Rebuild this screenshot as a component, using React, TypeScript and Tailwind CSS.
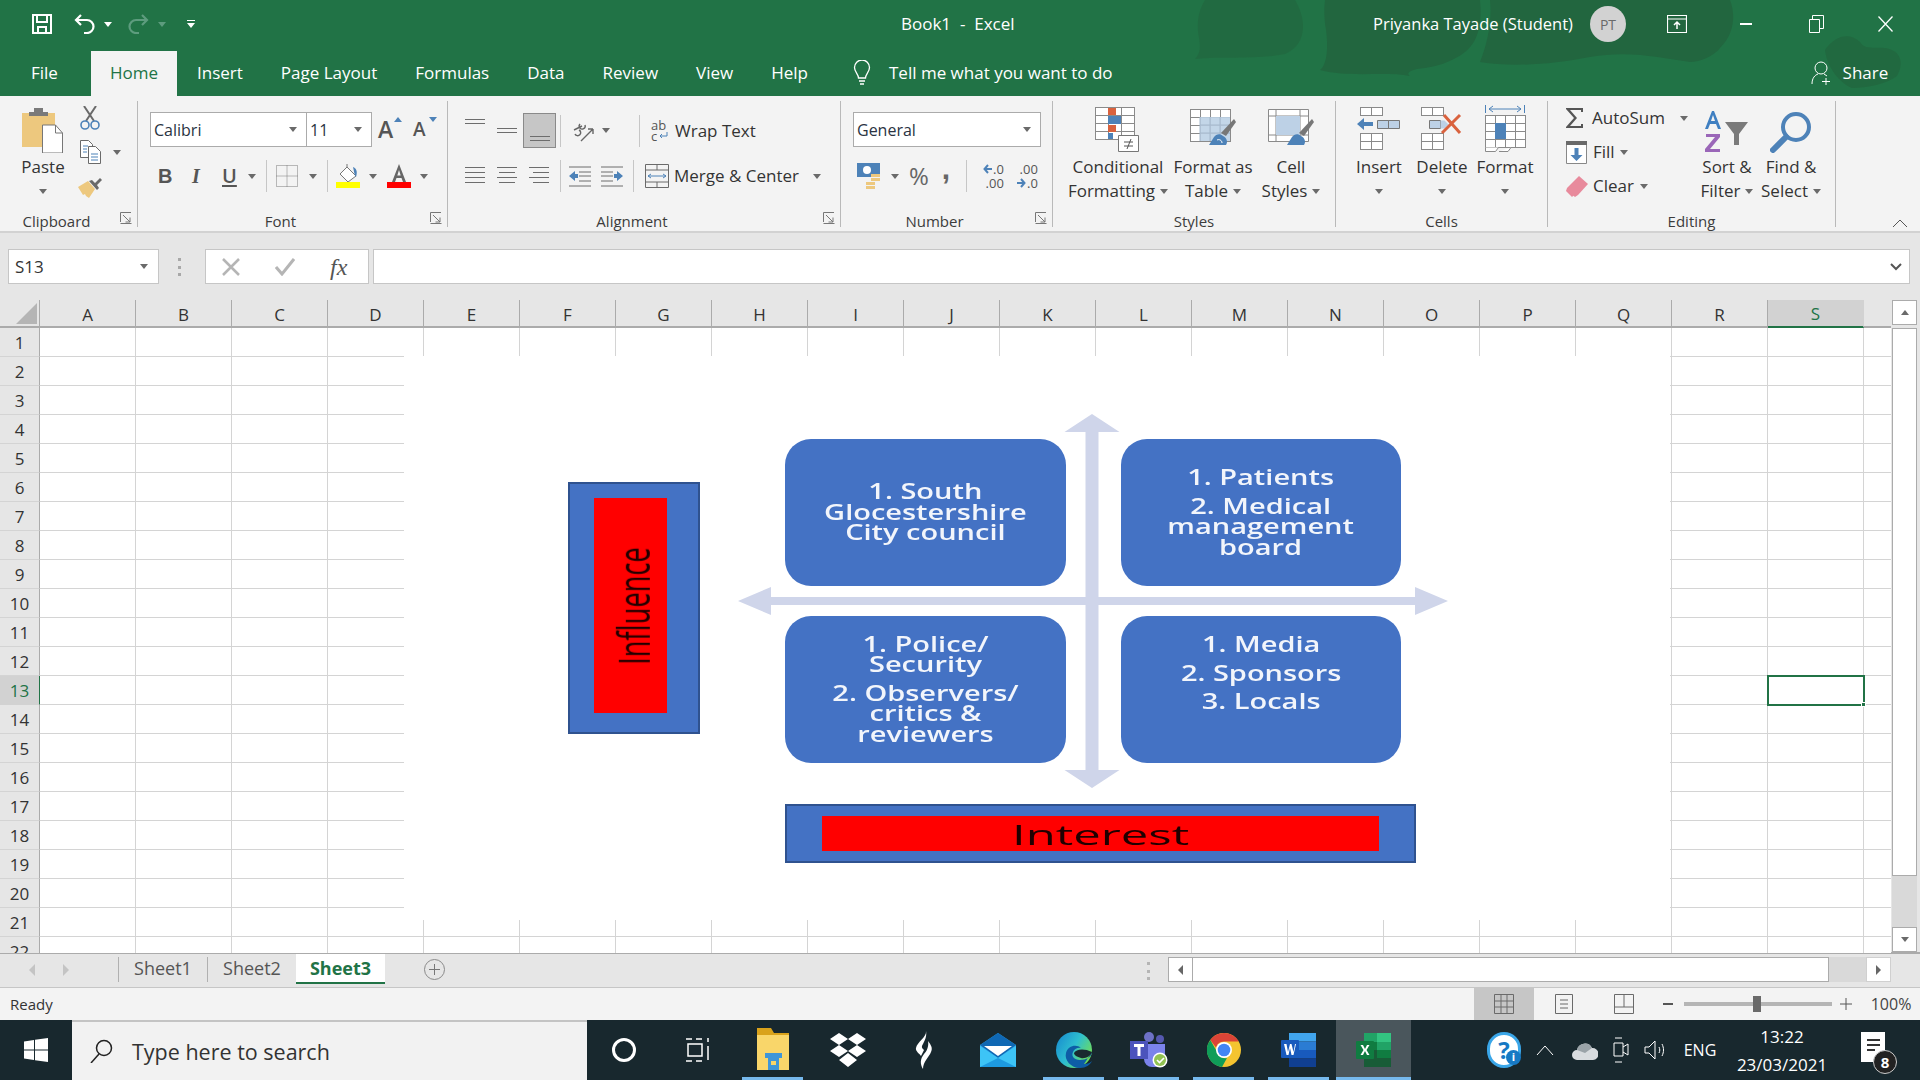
import { ReactNode } from "react";

const FONT = "font-['Open_Sans','Noto_Sans',sans-serif]";
const COLUMNS = "ABCDEFGHIJKLMNOPQRS".split("");
const ROWS = Array.from({ length: 22 }, (_, i) => i + 1);
const TABS = ["Insert", "Page Layout", "Formulas", "Data", "Review", "View", "Help"];

const Caret = ({ className = "", fill = "#6a6a6a" }: { className?: string; fill?: string }) => (
  <svg width="8" height="5" viewBox="0 0 8 5" className={className}>
    <path d="M0 0h8L4 5z" fill={fill} />
  </svg>
);

const Launcher = () => (
  <svg width="12" height="12" viewBox="0 0 12 12" className="absolute right-[5px] bottom-[3px]" fill="none" stroke="#777">
    <path d="M.5 10V.5H11M3 3l7 7M10 5.5V10H5.5M.5 11.5h11" />
  </svg>
);

const Group = ({ className, label, launcher, children }: { className: string; label: string; launcher?: boolean; children: ReactNode }) => (
  <div className={`relative flex h-[126px] shrink-0 flex-col border-r border-[#b9b9b9] ${className}`}>
    <div className="flex h-[110px] shrink-0 items-start">{children}</div>
    <div className={`shrink-0 text-center text-[15px] leading-[20px] text-[#3c3c3c] ${launcher ? "pr-[24px]" : ""}`}>{label}</div>
    {launcher && <Launcher />}
  </div>
);

const BigButton = ({ className, icon, l1, l2, iconH = "h-[54px]" }: { className: string; icon: ReactNode; l1: string; l2?: string; iconH?: string }) => (
  <div className={`flex shrink-0 flex-col items-center text-[17px] leading-[24px] text-[#333] ${className}`}>
    <div className={`flex items-end justify-center pb-[2px] ${iconH}`}>{icon}</div>
    <div className="whitespace-nowrap">{l1}</div>
    {l2 ? (
      <div className="flex items-center gap-[5px] whitespace-nowrap">
        {l2}
        <Caret />
      </div>
    ) : (
      <div className="flex h-[24px] items-center">
        <Caret />
      </div>
    )}
  </div>
);

const Combo = ({ className, text }: { className: string; text: string }) => (
  <div className={`flex h-[35px] items-center justify-between border border-[#ababab] bg-white pl-[3px] pr-[9px] text-[16px] text-[#2a3342] ${className}`}>
    {text}
    <Caret />
  </div>
);

const Lines = ({ rows }: { rows: [number, number, number][] }) => (
  <svg width="22" height="22" viewBox="0 0 22 22" stroke="#6d6d6d">
    {rows.map(([y, x, w], i) => (
      <path key={i} d={`M${x} ${y + 0.5}h${w}`} />
    ))}
  </svg>
);

const VSep = ({ className = "" }: { className?: string }) => <div className={`w-px bg-[#c6c6c6] ${className}`} />;

/* ribbon icons */
const PasteIcon = () => (
  <svg width="42" height="46" viewBox="0 0 42 46">
    <path d="M0 6h33v34H0z" fill="#edc87e" />
    <path d="M7 5h5V1h9v4h5v4H7z" fill="#7a7a7a" />
    <path d="M20.500 18h13l7 8v20h-20z" fill="#fff" stroke="#777" />
    <path d="M33.500 18v8h7" fill="none" stroke="#777" />
  </svg>
);
const ScissorsIcon = () => (
  <svg width="20" height="24" viewBox="0 0 20 24" fill="none">
    <path d="M4 0l10 15M16 0L6 15" stroke="#6a6a6a" strokeWidth="2" />
    <circle cx="5" cy="19" r="4" stroke="#4d82b8" strokeWidth="1.600" />
    <circle cx="15" cy="19" r="4" stroke="#4d82b8" strokeWidth="1.600" />
  </svg>
);
const CopyIcon = () => (
  <svg width="21" height="24" viewBox="0 0 21 24" fill="#fff" stroke="#6a6a6a">
    <path d="M.5.500h8l4 4v13h-12z" />
    <path d="M8.500 6.500h7l5 5v12h-12z" />
    <path d="M3 6h5M3 9h4M3 12h4M11 14h7M11 17h7M11 20h7" stroke="#4d82b8" />
  </svg>
);
const BrushIcon = () => (
  <svg width="24" height="22" viewBox="0 0 24 22">
    <path d="M0 10l10-6 7 8-6 9-3-2-1-2-2 1z" fill="#edc87e" />
    <path d="M11 4l3-1 3 3 5-5 2 2-5 5 2 3-2 2z" fill="#6a6a6a" />
  </svg>
);
const FontSizeA = ({ big, up }: { big: boolean; up: boolean }) => (
  <div className={`relative flex h-[30px] items-center font-semibold text-[#555] ${big ? "w-[35px] text-[23px]" : "w-[28px] text-[19px]"}`}>
    A
    <svg width="8" height="5" viewBox="0 0 8 5" className="absolute top-[2px] left-[16px]">
      <path d={up ? "M0 5h8L4 0z" : "M0 0h8L4 5z"} fill="#4d82b8" />
    </svg>
  </div>
);
const BorderIcon = () => (
  <svg width="22" height="22" viewBox="0 0 22 22" fill="none" stroke="#7a7a7a" strokeDasharray="1 1">
    <path d="M.5.500h21v21H.5zM11 .5v21M.5 11h21" />
  </svg>
);
const FillIcon = () => (
  <svg width="24" height="24" viewBox="0 0 24 24">
    <path d="M11 3l9 9-8 6-8-8z" fill="#fff" stroke="#777" />
    <path d="M11 3V0" stroke="#777" />
    <path d="M17 3c3 1 5 4 3 10-2-3-2-6-3-10z" fill="#4d82b8" />
    <path d="M0 18h24v6H0z" fill="#ffff00" />
  </svg>
);
const FontColorIcon = () => (
  <svg width="24" height="24" viewBox="0 0 24 24">
    <path d="M12 0l7 18h-3l-1.500-4h-5L8 18H5zM12 6l-1.700 5.500h3.400z" fill="#666" fillRule="evenodd" />
    <path d="M0 18h24v6H0z" fill="#ff0000" />
  </svg>
);
const OrientIcon = () => (
  <svg width="22" height="22" viewBox="0 0 22 22" fill="none" stroke="#666" strokeWidth="1.400">
    <path d="M9 21L21 9M21 9h-5M21 9v5" />
    <path d="M2 10l8-4M3 14a3 3 0 1 0 4-4M8 4a3 3 0 1 0 5 1" />
  </svg>
);
const IndentIcon = ({ flip }: { flip?: boolean }) => (
  <svg width="22" height="22" viewBox="0 0 22 22" className={flip ? "-scale-x-100" : ""}>
    <path d="M0 2h22M0 21h22M10 7h12M10 11h12M10 16h12" stroke="#6d6d6d" />
    <path d="M0 11l6-5v3h3v4H6v3z" fill="#4d82b8" />
  </svg>
);
const MergeIcon = () => (
  <svg width="24" height="24" viewBox="0 0 24 24" fill="none" stroke="#6a6a6a">
    <path d="M.5.500h23v23H.5zM.5 6h23M.5 18h23M12 .5V6M12 18v5.500" />
    <path d="M3 12h18M3 12l3-2M3 12l3 2M21 12l-3-2M21 12l-3 2" stroke="#4d82b8" />
  </svg>
);
const WrapIcon = () => (
  <svg width="10" height="8" viewBox="0 0 10 8" fill="none" stroke="#4d82b8">
    <path d="M9 0v4H2M4 2L2 4l2 2" />
  </svg>
);
const MoneyIcon = () => (
  <svg width="24" height="26" viewBox="0 0 24 26">
    <path d="M0 0h23v14H0z" fill="#4d82b8" />
    <circle cx="10" cy="7" r="4" fill="#fff" />
    <path d="M14 11h9v3h-9zM14 15h9v3h-9zM9 19h9v3H9zM9 23h9v3H9z" fill="#edc87e" />
  </svg>
);
const DecArrow = ({ left }: { left?: boolean }) => (
  <svg width="9" height="10" viewBox="0 0 9 10" fill="none" stroke="#4d82b8" strokeWidth="2">
    <path d={left ? "M9 5H2M5 1L1.500 5 5 9" : "M0 5h7M4 1l3.500 4L4 9"} />
  </svg>
);
const DecimalIcon = ({ less }: { less?: boolean }) => (
  <div className="flex w-[32px] flex-col text-[13px] leading-[14px] text-[#555]">
    <div className="flex items-center justify-end gap-[1px]">
      {!less && <DecArrow left />}
      {less ? ".00" : ".0"}
    </div>
    <div className="flex items-center justify-end gap-[1px]">
      {less && <DecArrow />}
      {less ? ".0" : ".00"}
    </div>
  </div>
);
const GridSheet = ({ x, y, w, h, cols, rows }: { x: number; y: number; w: number; h: number; cols: number; rows: number }) => (
  <g fill="#fff" stroke="#8a8a8a">
    {Array.from({ length: cols * rows }, (_, i) => (
      <rect key={i} x={x + (i % cols) * (w / cols) + 0.5} y={y + Math.floor(i / cols) * (h / rows) + 0.5} width={w / cols} height={h / rows} />
    ))}
  </g>
);
const CondIcon = () => (
  <svg width="46" height="46" viewBox="0 0 46 46">
    <GridSheet x={0} y={0} w={39} h={32} cols={3} rows={4} />
    <path d="M13 1h8v7h-8zM13 18h8v7h-8z" fill="#d9623e" />
    <path d="M13 9h13v8H13zM13 26h5v6h-5z" fill="#4d82b8" />
    <path d="M23.500 28.500h20v16h-20z" fill="#fff" stroke="#777" />
    <path d="M29 35h9M29 39h9M36 32l-4 10" stroke="#555" fill="none" />
  </svg>
);
const TableIcon = () => (
  <svg width="46" height="44" viewBox="0 0 46 44">
    <GridSheet x={0} y={0} w={40} h={32} cols={4} rows={4} />
    <path d="M10 8h30v24H10z" fill="#bdd1e6" opacity=".9" />
    <path d="M10 8v24M20 8v24M30 8v24M10 16h30M10 24h30" stroke="#a5b8cc" />
    <path d="M44 10l2 3-10 14-5-3z" fill="#777" />
    <path d="M33 27c-3-3-7-2-9 1l-5 8h17c2-3 1-7-3-9z" fill="#4d82b8" />
    <path d="M27 31c2-1 5 0 5 3" stroke="#fff" fill="none" />
  </svg>
);
const CellStyleIcon = () => (
  <svg width="46" height="44" viewBox="0 0 46 44">
    <path d="M.5.500h40v32H.5z" fill="#fff" stroke="#8a8a8a" />
    <path d="M.5 7h40M8 .5v32M32 .5v32M.5 26h40" stroke="#8a8a8a" />
    <path d="M8 7h24v19H8z" fill="#bdd1e6" />
    <path d="M44 10l2 3-10 14-5-3z" fill="#777" />
    <path d="M33 27c-3-3-7-2-9 1l-5 8h17c2-3 1-7-3-9z" fill="#4d82b8" />
  </svg>
);
const InsertIcon = () => (
  <svg width="44" height="46" viewBox="0 0 44 46">
    <GridSheet x={3} y={0} w={22} h={8} cols={2} rows={1} />
    <GridSheet x={3} y={26} w={22} h={16} cols={2} rows={2} />
    <g fill="#bdd1e6" stroke="#777"><path d="M20.500 13.500h11v8h-11zM31.500 13.500h11v8h-11z" /></g>
    <path d="M0 17l7-6v4h9v4H7v4z" fill="#4d82b8" />
  </svg>
);
const DeleteIcon = () => (
  <svg width="44" height="46" viewBox="0 0 44 46">
    <GridSheet x={1} y={0} w={22} h={8} cols={2} rows={1} />
    <GridSheet x={1} y={26} w={22} h={16} cols={2} rows={2} />
    <path d="M9.500 13.500h11v8h-11z" fill="#bdd1e6" stroke="#777" />
    <path d="M20.500 13.500h4l4 4-4 4h-4z" fill="#bdd1e6" />
    <path d="M22 26l18-18M24 8l16 18" stroke="#d9623e" strokeWidth="3" />
  </svg>
);
const FormatIcon = () => (
  <svg width="42" height="48" viewBox="0 0 42 48">
    <path d="M1.500 0v8M40.500 0v8M5 4h32M5 4l4-3M5 4l4 3M37 4l-4-3M37 4l-4 3" fill="none" stroke="#4d82b8" />
    <GridSheet x={1} y={10} w={40} h={32} cols={4} rows={4} />
    <path d="M11 18h11v16H11z" fill="#4d82b8" />
    <path d="M1.500 42.500v4h10l3-4M15 46.500h9l3-4" fill="#fff" stroke="#8a8a8a" />
  </svg>
);
const SigmaIcon = () => (
  <svg width="18" height="20" viewBox="0 0 18 20"><path d="M0 0h17v4h-2V2H4l7 8-7 8h11v-2h2v4H0v-1l8-9-8-9z" fill="#555" /></svg>
);
const FillDownIcon = () => (
  <svg width="21" height="23" viewBox="0 0 21 23">
    <path d="M.5.500h20v22H.5z" fill="#fff" stroke="#888" />
    <path d="M0 0h21v4H0z" fill="#6a6a6a" />
    <path d="M8.500 7h4v7h4l-6 6-6-6h4z" fill="#4d82b8" />
  </svg>
);
const EraserIcon = () => (
  <svg width="22" height="21" viewBox="0 0 22 21">
    <path d="M13 0l9 8-10 11-3 2-8-6v-3z" fill="#e88a9c" />
    <path d="M1 12l7 7-2 2-6-6z" fill="#e88a9c" />
  </svg>
);
const SortIcon = () => (
  <svg width="44" height="42" viewBox="0 0 44 42">
    <path d="M0 18L7 0h2l7 18h-3l-2-5H5l-2 5zM6 10h4L8 4z" fill="#3f7fc1" fillRule="evenodd" />
    <path d="M1 23h14v3L5 38h10v3H0v-3l10-12H1z" fill="#9a66b8" />
    <path d="M20 11h23l-9 12v11h-5V23z" fill="#7a7a7a" />
  </svg>
);
const FindIcon = () => (
  <svg width="42" height="42" viewBox="0 0 42 42" fill="none" stroke="#4d82b8">
    <circle cx="26" cy="16" r="13" strokeWidth="4" />
    <path d="M16 26L3 39" strokeWidth="6" strokeLinecap="round" />
  </svg>
);

/* taskbar icons */
const FolderIcon = () => (
  <svg width="34" height="48" viewBox="0 0 34 48">
    <path d="M1 2h14l3 5h15v6H1z" fill="#d9a21b" />
    <path d="M1 9h32v35H1z" fill="#f9d66a" />
    <path d="M9 27h17v5h-3v12H12V32H9z" fill="#3f96d8" />
    <path d="M15 35h5v4h-5z" fill="#f9d66a" />
  </svg>
);
const DropboxIcon = () => (
  <svg width="36" height="34" viewBox="0 0 36 34" fill="#fff">
    <path d="M9 0l9 6-9 6-9-6zM27 0l9 6-9 6-9-6zM9 12l9 6-9 6-9-6zM27 12l9 6-9 6-9-6zM18 20l9 7-9 7-9-7z" />
  </svg>
);
const SwayIcon = () => (
  <svg width="20" height="38" viewBox="0 0 20 38" fill="#fff">
    <path d="M13 0c1 6-9 11-10 17-1 3 4 6 5 8l3-6c-2-2-3-3-1-6 2-4 4-8 3-13zM15 10c3 4 5 7 3 11-2 5-8 10-8 17-3-5-3-10 1-15 3-3 5-8 4-13z" />
  </svg>
);
const MailIcon = () => (
  <svg width="36" height="34" viewBox="0 0 36 34">
    <path d="M0 12L18 0l18 12v22H0z" fill="#2fa8e8" />
    <path d="M18 0L0 12l18 13 18-13z" fill="#0f68b4" />
    <path d="M4 13h28L18 23z" fill="#fff" />
    <path d="M0 13l18 12 18-12v21H0z" fill="#3dc4f6" />
    <path d="M0 34l18-9 18 9z" fill="#1d9ae0" />
  </svg>
);
const EdgeIcon = () => (
  <svg width="36" height="36" viewBox="0 0 36 36">
    <defs>
      <linearGradient id="edgeG" x1="0" y1="0" x2="1" y2="0.6">
        <stop offset="0" stopColor="#1586cf" />
        <stop offset=".55" stopColor="#2ebfd0" />
        <stop offset="1" stopColor="#6fdc5a" />
      </linearGradient>
    </defs>
    <circle cx="18" cy="18" r="18" fill="url(#edgeG)" />
    <path d="M36 20c0 5-6 8-12 8-6 0-9-4-7-8 1-3 5-5 8-4-4-4-13-3-15 5-2 7 5 15 14 15 6 0 10-3 12-7-2 2-4 3-8 3" fill="#0e5da6" />
    <path d="M18 21c2-4 10-5 18-1-1 4-7 7-11 6s-7-3-7-5z" fill="#1a2a30" />
  </svg>
);
const TeamsIcon = () => (
  <svg width="38" height="36" viewBox="0 0 38 36">
    <circle cx="19" cy="5" r="5" fill="#6d71c6" />
    <circle cx="30" cy="7" r="4" fill="#5558af" />
    <path d="M14 12h21v14a9 9 0 0 1-9 9h-4a8 8 0 0 1-8-8z" fill="#7b83eb" />
    <path d="M0 9h18v18H0z" fill="#4b53bc" />
    <path d="M4 12h10v3h-3.500v9h-3v-9H4z" fill="#fff" />
    <circle cx="30" cy="28" r="7.500" fill="#fff" />
    <circle cx="30" cy="28" r="6" fill="#92c353" />
    <path d="M27 28l2.500 2.500L34 26" stroke="#fff" strokeWidth="1.600" fill="none" />
  </svg>
);
const ChromeIcon = () => (
  <svg width="34" height="34" viewBox="0 0 34 34">
    <circle cx="17" cy="17" r="17" fill="#f4c430" />
    <path d="M17 0a17 17 0 0 1 14.700 8.500H17a8.500 8.500 0 0 0-8 6L3.300 6.900A17 17 0 0 1 17 0z" fill="#db4437" />
    <path d="M3.300 6.900L11 20.500a8.500 8.500 0 0 0 9 4.500l-5 9A17 17 0 0 1 3.300 6.900z" fill="#0f9d58" />
    <circle cx="17" cy="17" r="8" fill="#fff" />
    <circle cx="17" cy="17" r="6.300" fill="#4285f4" />
  </svg>
);
const WordIcon = () => (
  <svg width="36" height="34" viewBox="0 0 36 34">
    <path d="M8 0h27v8.500H8z" fill="#41a5ee" />
    <path d="M8 8.500h27V17H8z" fill="#2b7cd3" />
    <path d="M8 17h27v8.500H8z" fill="#185abd" />
    <path d="M8 25.500h27V34H8z" fill="#103f91" />
    <rect y="7" width="18" height="18" rx="1" fill="#185abd" />
    <path d="M3 11h2.500l1.500 8 2-8h1.500l2 8 1.500-8H15l-2.500 11h-2l-1.500-7-1.500 7h-2z" fill="#fff" />
  </svg>
);
const ExcelIcon = () => (
  <svg width="36" height="34" viewBox="0 0 36 34">
    <path d="M8 0h13v9H8z" fill="#21a366" />
    <path d="M21 0h14v9H21z" fill="#33c481" />
    <path d="M8 9h13v8H8z" fill="#107c41" />
    <path d="M21 9h14v8H21z" fill="#21a366" />
    <path d="M8 17h13v8H8z" fill="#185c37" />
    <path d="M21 17h14v8H21z" fill="#107c41" />
    <path d="M8 25h27v9H8z" fill="#185c37" />
    <rect y="8" width="18" height="18" rx="1" fill="#107c41" />
    <path d="M4.500 12H7l2 4 2-4h2.500L10.500 17l3 5H11l-2-4-2 4H4.500l3-5z" fill="#fff" />
  </svg>
);

const TaskButton = ({ icon, line, active, className = "w-[75px]" }: { icon: ReactNode; line?: boolean; active?: boolean; className?: string }) => (
  <div className={`relative flex h-full shrink-0 items-center justify-center ${active ? "bg-[#4a565c]" : ""} ${className}`}>
    {icon}
    {line && <div className={`absolute bottom-0 h-[3px] bg-[#76b9ed] ${active ? "inset-x-0" : "left-[7px] right-[7px]"}`} />}
  </div>
);

const Box = ({ className, children }: { className: string; children: ReactNode }) => (
  <div className={`absolute flex h-[147px] w-[280px] flex-col items-center rounded-[26px] bg-[#4472c4] text-[21px] leading-[20.500px] font-semibold text-[#f2f5fb] ${className}`}>
    <div className="-mt-px flex scale-x-[1.38] flex-col items-center gap-[8px] text-center blur-[0.3px]">{children}</div>
  </div>
);

export default function App() {
  return (
    <div className={`flex h-[1080px] w-[1920px] flex-col overflow-hidden bg-[#e6e6e6] ${FONT}`}>
      {/* title bar + tabs */}
      <header className="relative h-[96px] shrink-0 bg-[#217346] text-white">
        <svg width="920" height="96" viewBox="0 0 920 96" className="absolute top-0 left-[1000px]" fill="#22663f">
          <path d="M205 0h90c12 20 12 45-10 54-30 6-60 2-90 5 8-8 4-18 3-28-1-13 2-23 7-31z" opacity=".7" />
          <path d="M325 0h155c2 20 0 40-15 52-10 8-25 14-40 16-12 1-20 4-15 8-25-5-60 2-90-6 8-6 8-25 6-40-2-12-2-22-1-30z" />
          <path d="M490 0h240c6 15 4 35-10 48-6 8-20 14-30 14-30-4-60-12-100-5-40 8-80 10-110 5 8-20 12-42 10-62z" />
          <path d="M825 50c10-15 25-18 35-8 5 8 15 5 25 6 15 2 20 14 12 28-10 8-30 12-45 12-12-5-25-20-27-38z" opacity=".8" />
        </svg>
        <div className="relative flex h-[48px] items-center">
          <div className="flex w-[860px] items-center pl-[32px]">
            <svg width="20" height="20" viewBox="0 0 20 20" fill="none" stroke="#fff" strokeWidth="2">
              <path d="M1 1h18v18H1zM5 1v7h10V1M6 19v-6h8v6" />
            </svg>
            <svg width="22" height="20" viewBox="0 0 22 20" fill="none" stroke="#fff" strokeWidth="2.200" className="ml-[22px]">
              <path d="M7 1L2 6l5 5M2 6h11a6 6 0 0 1 0 13h-3" />
            </svg>
            <Caret fill="#fff" className="ml-[8px]" />
            <svg width="22" height="20" viewBox="0 0 22 20" fill="none" stroke="#5d9c7e" strokeWidth="2.200" className="ml-[15px]">
              <path d="M15 1l5 5-5 5M20 6H9a6 6 0 0 0 0 13h3" />
            </svg>
            <Caret fill="#5d9c7e" className="ml-[9px]" />
            <svg width="8" height="8" viewBox="0 0 8 8" fill="#fff" className="ml-[21px]">
              <path d="M0 0h8v1H0zM0 3h8L4 8z" />
            </svg>
          </div>
          <div className="w-[180px] pl-[41px] text-[17px] whitespace-pre">Book1  -  Excel</div>
          <div className="ml-[333px] text-[16.500px] whitespace-nowrap">Priyanka Tayade (Student)</div>
          <div className="ml-[17px] flex h-[36px] w-[36px] items-center justify-center rounded-full bg-[#d2d2d2] text-[14px] text-[#6a6a6a]">PT</div>
          <svg width="20" height="18" viewBox="0 0 20 18" fill="none" stroke="#fff" className="ml-[41px]">
            <path d="M.5.500h19v17H.5zM.5 4h19" strokeWidth="1.200" />
            <path d="M10 14V7M7 10l3-3 3 3" strokeWidth="1.500" />
          </svg>
          <div className="ml-[53px] h-[2px] w-[12px] bg-white" />
          <svg width="15" height="18" viewBox="0 0 15 18" fill="none" stroke="#fff" className="ml-[57px]">
            <path d="M.5 4.500h10v13H.5zM3.500 4.500v-4h11v13h-4" />
          </svg>
          <svg width="15" height="16" viewBox="0 0 15 16" fill="none" stroke="#fff" strokeWidth="1.300" className="ml-[54px]">
            <path d="M.5.500l14 15M14.500.5L.5 15.500" />
          </svg>
        </div>
        <div className="relative flex h-[48px] items-center pt-[2px] text-[17px]">
          <div className="w-[91px] pl-[31px]">File</div>
          <div className="flex h-[45px] w-[86px] items-center justify-center self-end bg-[#f3f3f3] pb-[1px] text-[#217346]">Home</div>
          <div className="flex items-center gap-[38px] pl-[20px]">
            {TABS.map((t) => (
              <span key={t}>{t}</span>
            ))}
          </div>
          <svg width="18" height="26" viewBox="0 0 18 26" fill="none" stroke="#fff" strokeWidth="1.300" className="ml-[45px]">
            <path d="M5.500 18c0-4-4-6-4-10.500a7.500 7.500 0 0 1 15 0C16.500 12 12.500 14 12.500 18zM6 21h6M7 24h4" />
          </svg>
          <span className="ml-[18px] whitespace-nowrap">Tell me what you want to do</span>
          <svg width="22" height="24" viewBox="0 0 22 24" fill="none" stroke="#fff" className="ml-[698px]">
            <circle cx="10" cy="7" r="6" />
            <path d="M1 23c0-6 3-9 6-10M13 13l3 2M15 17v7M11 20.500h8" />
          </svg>
          <span className="ml-[10px]">Share</span>
        </div>
      </header>

      {/* ribbon */}
      <section className="flex h-[137px] shrink-0 border-b-2 border-[#d2d2d2] bg-[#f3f3f3] pt-[5px]">
        <Group className="w-[138px]" label="Clipboard" launcher>
          <BigButton className="ml-[6px] w-[74px]" icon={<PasteIcon />} l1="Paste" />
          <div className="flex flex-col pt-[5px]">
            <ScissorsIcon />
            <div className="mt-[10px] flex items-center gap-[12px]">
              <CopyIcon />
              <Caret />
            </div>
            <div className="mt-[13px] -ml-[2px]">
              <BrushIcon />
            </div>
          </div>
        </Group>

        <Group className="w-[310px]" label="Font" launcher>
          <div className="flex flex-col pt-[11px] pl-[12px]">
            <div className="flex items-center">
              <Combo className="w-[157px]" text="Calibri" />
              <Combo className="-ml-px w-[66px]" text="11" />
              <div className="ml-[6px] flex">
                <FontSizeA big up />
                <FontSizeA big={false} up={false} />
              </div>
            </div>
            <div className="mt-[13px] flex h-[32px] items-center text-[20px] text-[#555]">
              <span className="ml-[8px] w-[32px] font-['Liberation_Sans',sans-serif] font-bold">B</span>
              <span className="w-[32px] pl-[2px] font-['Liberation_Serif',serif] font-bold italic">I</span>
              <span className="w-[26px] font-semibold underline underline-offset-2">U</span>
              <Caret className="mr-[10px]" />
              <VSep className="h-[32px]" />
              <div className="ml-[9px]"><BorderIcon /></div>
              <Caret className="ml-[11px]" />
              <VSep className="ml-[10px] h-[32px]" />
              <div className="ml-[8px]"><FillIcon /></div>
              <Caret className="ml-[9px]" />
              <div className="ml-[10px]"><FontColorIcon /></div>
              <Caret className="ml-[9px]" />
            </div>
          </div>
        </Group>

        <Group className="w-[393px]" label="Alignment" launcher>
          <div className="flex flex-col pt-[12px] pl-[17px]">
            <div className="flex h-[35px] items-center">
              <div className="-mt-[14px]"><Lines rows={[[6, 0, 20], [10, 0, 20]]} /></div>
              <div className="ml-[10px]"><Lines rows={[[8, 0, 20], [12, 0, 20]]} /></div>
              <div className="ml-[4px] flex h-[35px] w-[33px] items-end justify-center border border-[#8a8a8a] bg-[#c6c6c6] pb-[1px]">
                <Lines rows={[[12, 1, 20], [16, 1, 20]]} />
              </div>
              <VSep className="ml-[4px] h-[32px]" />
              <div className="ml-[11px]"><OrientIcon /></div>
              <Caret className="ml-[8px]" />
              <VSep className="ml-[29px] h-[32px]" />
              <div className="ml-[11px] flex w-[24px] flex-col text-[13px] leading-[11px] text-[#555]">
                <span>ab</span>
                <span className="flex items-center gap-[1px]">c<WrapIcon /></span>
              </div>
              <span className="text-[17px] text-[#333]">Wrap Text</span>
            </div>
            <div className="mt-[12px] flex h-[32px] items-center">
              <Lines rows={[[2, 0, 20], [7, 0, 20], [12, 0, 20], [17, 0, 20]]} />
              <div className="ml-[10px]"><Lines rows={[[2, 0, 20], [7, 2, 16], [12, 0, 20], [17, 2, 16]]} /></div>
              <div className="ml-[10px]"><Lines rows={[[2, 0, 20], [7, 4, 16], [12, 0, 20], [17, 4, 16]]} /></div>
              <VSep className="ml-[9px] h-[32px]" />
              <div className="ml-[8px]"><IndentIcon /></div>
              <div className="ml-[10px]"><IndentIcon flip /></div>
              <VSep className="ml-[10px] h-[32px]" />
              <div className="ml-[11px]"><MergeIcon /></div>
              <span className="ml-[5px] text-[17px] whitespace-nowrap text-[#333]">Merge &amp; Center</span>
              <Caret className="ml-[14px]" />
            </div>
          </div>
        </Group>

        <Group className="w-[212px]" label="Number" launcher>
          <div className="flex flex-col pt-[11px] pl-[12px]">
            <Combo className="w-[188px]" text="General" />
            <div className="mt-[13px] flex h-[32px] items-center text-[#666]">
              <div className="ml-[4px]"><MoneyIcon /></div>
              <Caret className="ml-[10px]" />
              <span className="ml-[10px] text-[24px]">%</span>
              <span className="-mt-[14px] ml-[13px] w-[10px] font-['Liberation_Sans',sans-serif] text-[30px] leading-none font-bold">,</span>
              <VSep className="ml-[14px] h-[32px]" />
              <div className="ml-[5px]"><DecimalIcon /></div>
              <div className="ml-[2px]"><DecimalIcon less /></div>
            </div>
          </div>
        </Group>

        <Group className="w-[283px]" label="Styles">
          <BigButton className="ml-[12px] w-[106px]" icon={<CondIcon />} l1="Conditional" l2="Formatting" />
          <BigButton className="ml-[-3px] w-[90px]" icon={<TableIcon />} l1="Format as" l2="Table" />
          <BigButton className="ml-[-3px] w-[72px]" icon={<CellStyleIcon />} l1="Cell" l2="Styles" />
        </Group>

        <Group className="w-[212px]" label="Cells">
          <BigButton className="ml-[13px] w-[60px]" icon={<InsertIcon />} l1="Insert" />
          <BigButton className="ml-[2px] w-[62px]" icon={<DeleteIcon />} l1="Delete" />
          <BigButton className="ml-[1px] w-[62px]" icon={<FormatIcon />} l1="Format" />
        </Group>

        <Group className="w-[288px]" label="Editing">
          <div className="flex w-[146px] flex-col pt-[5px] pl-[18px] text-[17px] text-[#333]">
            <div className="flex h-[24px] items-center">
              <SigmaIcon />
              <span className="ml-[8px]">AutoSum</span>
              <Caret className="ml-[15px]" />
            </div>
            <div className="mt-[9px] flex h-[26px] items-center">
              <FillDownIcon />
              <span className="ml-[6px]">Fill</span>
              <Caret className="ml-[5px]" />
            </div>
            <div className="mt-[8px] flex h-[26px] items-center">
              <EraserIcon />
              <span className="ml-[5px]">Clear</span>
              <Caret className="ml-[6px]" />
            </div>
          </div>
          <BigButton className="ml-[-2px] w-[70px]" icon={<SortIcon />} l1="Sort &" l2="Filter" />
          <BigButton className="ml-[-4px] w-[66px]" icon={<FindIcon />} l1="Find &" l2="Select" />
        </Group>

        <div className="flex flex-1 items-end justify-end pr-[13px] pb-[4px]">
          <svg width="14" height="8" viewBox="0 0 14 8" fill="none" stroke="#555"><path d="M0 8l7-7 7 7" /></svg>
        </div>
      </section>

      {/* formula bar */}
      <section className="flex h-[67px] shrink-0 items-start pt-[16px] pl-[8px]">
        <div className="flex h-[35px] w-[151px] items-center justify-between border border-[#c6c6c6] bg-white pr-[10px] pl-[6px] text-[17px] text-[#333]">
          S13
          <Caret />
        </div>
        <div className="mt-[9px] ml-[19px] flex h-[18px] w-[3px] flex-col justify-between">
          <div className="h-[3px] bg-[#a8a8a8]" />
          <div className="h-[3px] bg-[#a8a8a8]" />
          <div className="h-[3px] bg-[#a8a8a8]" />
        </div>
        <div className="ml-[24px] flex h-[35px] w-[164px] items-center border border-[#c6c6c6] bg-white">
          <svg width="18" height="18" viewBox="0 0 18 18" stroke="#b5b5b5" strokeWidth="2.500" className="ml-[16px]"><path d="M1 1l16 16M17 1L1 17" /></svg>
          <svg width="20" height="18" viewBox="0 0 20 18" fill="none" stroke="#b5b5b5" strokeWidth="3" className="ml-[35px]"><path d="M1 9l6 7L19 1" /></svg>
          <span className="ml-[35px] font-['Liberation_Serif',serif] text-[24px] italic text-[#555]">fx</span>
        </div>
        <div className="ml-[4px] flex h-[35px] w-[1537px] items-center justify-end border border-[#c6c6c6] bg-white pr-[7px]">
          <svg width="12" height="8" viewBox="0 0 12 8" fill="none" stroke="#555" strokeWidth="2"><path d="M1 1l5 5 5-5" /></svg>
        </div>
      </section>

      {/* sheet */}
      <section className="flex h-[653px] shrink-0">
        <div className="relative h-full w-[1891px] overflow-hidden bg-white">
          <div className="flex h-[28px] border-b-2 border-[#ababab] bg-[#e6e6e6] text-[17px] text-[#333]">
            <div className="flex h-full w-[40px] shrink-0 items-end justify-end border-r border-[#ababab] p-[2px]">
              <div className="h-0 w-0 border-b-[21px] border-l-[21px] border-b-[#b5b5b5] border-l-transparent" />
            </div>
            {COLUMNS.map((c) => (
              <div
                key={c}
                className={`-mb-[2px] flex h-[28px] w-[96px] shrink-0 items-center justify-center border-r pt-[1px] ${
                  c === "S" ? "border-b-2 border-[#217346] border-r-[#d2d2d2] bg-[#d2d2d2] text-[#217346]" : "border-[#ababab]"
                }`}
              >
                {c}
              </div>
            ))}
          </div>
          {ROWS.map((r) => (
            <div key={r} className="flex h-[29px]">
              <div
                className={`flex h-full w-[40px] shrink-0 items-center justify-center border-r border-b pt-[2px] text-[17px] ${
                  r === 13 ? "border-b-[#d2d2d2] border-r-[#217346] bg-[#d2d2d2] text-[#217346]" : "border-[#ababab] border-b-[#d4d4d4] bg-[#e6e6e6] text-[#333]"
                }`}
              >
                {r}
              </div>
              {COLUMNS.map((c) => (
                <div key={c} className="h-full w-[96px] shrink-0 border-r border-b border-[#d4d4d4]" />
              ))}
              <div className="h-full flex-1 border-b border-[#d4d4d4]" />
            </div>
          ))}

          {/* selected cell S13 */}
          <div className="absolute top-[375px] left-[1767px] h-[31px] w-[98px] border-2 border-[#217346]">
            <div className="absolute -right-[3px] -bottom-[3px] h-[5px] w-[5px] border border-white bg-[#217346]" />
          </div>

          {/* pasted picture */}
          <div className="absolute top-[56px] left-[404px] h-[564px] w-[1266px] bg-white">
            <svg width="1266" height="564" viewBox="0 0 1266 564" className="absolute inset-0" fill="#cfd5ea">
              <path d="M688 58l27.500 18H694.500v338H715.500L688 432l-27.500-18H681.500V76H660.500z" />
              <path d="M334 245l33-14v10h644v-10l33 14-33 14v-10H367v10z" />
            </svg>
            <div className="absolute top-[126px] left-[164px] flex h-[252px] w-[132px] items-center justify-center border-2 border-[#2f528f] bg-[#4472c4]">
              <div className="mr-[7px] mb-[5px] flex h-[215px] w-[73px] items-center justify-center bg-[#ff0000] pl-[4px]">
                <span className="-rotate-90 scale-x-[0.62] text-[44px] leading-none whitespace-nowrap text-[#200000] blur-[0.3px]">Influence</span>
              </div>
            </div>
            <Box className="top-[83px] left-[381px] w-[281px] justify-center">
              <div>1. South<br />Glocestershire<br />City council</div>
            </Box>
            <Box className="top-[83px] left-[717px] justify-center">
              <div>1. Patients</div>
              <div>2. Medical<br />management<br />board</div>
            </Box>
            <Box className="top-[260px] left-[381px] w-[281px] justify-center">
              <div>1. Police/<br />Security</div>
              <div>2. Observers/<br />critics &amp;<br />reviewers</div>
            </Box>
            <Box className="top-[260px] left-[717px] pt-[19px]">
              <div>1. Media</div>
              <div>2. Sponsors</div>
              <div>3. Locals</div>
            </Box>
            <div className="absolute top-[448px] left-[381px] flex h-[59px] w-[631px] items-center justify-center border-2 border-[#2f528f] bg-[#4472c4]">
              <div className="flex h-[35px] w-[557px] items-center justify-center bg-[#ff0000]">
                <span className="scale-x-[1.75] text-[28px] font-medium text-[#200000] blur-[0.3px]">Interest</span>
              </div>
            </div>
          </div>
        </div>
        <div className="flex w-[29px] shrink-0 flex-col border-b border-[#ababab] pl-px">
          <div className="flex h-[25px] w-[25px] items-center justify-center border border-[#ababab] bg-white">
            <Caret className="rotate-180" />
          </div>
          <div className="mt-[3px] h-[549px] w-[25px] border border-[#ababab] bg-white" />
          <div className="h-[51px] w-[25px] bg-[#d9d9d9]" />
          <div className="mt-auto flex h-[25px] w-[25px] items-center justify-center border border-[#ababab] bg-white">
            <Caret />
          </div>
        </div>
      </section>

      {/* sheet tabs */}
      <section className="flex h-[34px] shrink-0 items-start border-t border-[#ababab] text-[18px] text-[#555]">
        <svg width="6" height="12" viewBox="0 0 6 12" fill="#c4c4c4" className="mt-[10px] ml-[29px]"><path d="M6 0v12L0 6z" /></svg>
        <svg width="6" height="12" viewBox="0 0 6 12" fill="#c4c4c4" className="mt-[10px] ml-[28px]"><path d="M0 0v12l6-6z" /></svg>
        <div className="mt-[3px] ml-[49px] flex h-[25px] w-[89px] items-center justify-center border-l border-[#b0b0b0] pb-[2px]">Sheet1</div>
        <div className="mt-[3px] flex h-[25px] w-[89px] items-center justify-center border-l border-[#b0b0b0] pb-[2px]">Sheet2</div>
        <div className="flex h-[30px] w-[89px] items-center justify-center border-b-2 border-[#217346] bg-white font-bold text-[#217346]">Sheet3</div>
        <div className="mt-[5px] ml-[39px] flex h-[21px] w-[21px] items-center justify-center rounded-full border border-[#8a8a8a] text-[#777]">
          <svg width="11" height="11" viewBox="0 0 11 11" stroke="#777"><path d="M5.500 0v11M0 5.500h11" /></svg>
        </div>
        <div className="mt-[8px] ml-[702px] flex h-[18px] w-[3px] flex-col justify-between">
          <div className="h-[3px] bg-[#b5b5b5]" />
          <div className="h-[3px] bg-[#b5b5b5]" />
          <div className="h-[3px] bg-[#b5b5b5]" />
        </div>
        <div className="mt-[3px] ml-[18px] flex h-[25px] w-[723px]">
          <div className="flex w-[25px] items-center justify-center border border-[#ababab] bg-white">
            <svg width="5" height="10" viewBox="0 0 5 10" fill="#666"><path d="M5 0v10L0 5z" /></svg>
          </div>
          <div className="w-[636px] border border-l-0 border-[#ababab] bg-white" />
          <div className="flex-1 bg-[#d9d9d9]" />
          <div className="flex w-[25px] items-center justify-center border border-[#d0d0d0] bg-white">
            <svg width="5" height="10" viewBox="0 0 5 10" fill="#666"><path d="M0 0v10l5-5z" /></svg>
          </div>
        </div>
      </section>

      {/* status bar */}
      <section className="flex h-[33px] shrink-0 items-center border-t border-[#c6c6c6] bg-[#f3f3f3] pl-[10px] text-[15px] text-[#333]">
        <span>Ready</span>
        <div className="ml-[1421px] flex h-full w-[60px] items-center justify-center bg-[#c6c6c6]">
          <svg width="20" height="20" viewBox="0 0 20 20" fill="none" stroke="#6a6a6a"><path d="M.5.500h19v19H.5zM7 .5v19M13 .5v19M.5 7h19M.5 13h19" /></svg>
        </div>
        <div className="flex h-full w-[60px] items-center justify-center">
          <svg width="18" height="20" viewBox="0 0 18 20" fill="none" stroke="#6a6a6a"><path d="M.5.500h17v19H.5zM5 6h8M5 10h8M5 14h8" /></svg>
        </div>
        <div className="flex h-full w-[60px] items-center justify-center">
          <svg width="20" height="20" viewBox="0 0 20 20" fill="none" stroke="#6a6a6a"><path d="M.5.500h19v19H.5zM.5 13h19M10 .5V13" /></svg>
        </div>
        <div className="ml-[9px] h-[2px] w-[10px] bg-[#555]" />
        <div className="relative ml-[11px] flex h-[4px] w-[148px] items-center bg-[#b5b5b5]">
          <div className="absolute left-[69px] h-[16px] w-[8px] bg-[#6a6a6a]" />
        </div>
        <svg width="12" height="12" viewBox="0 0 12 12" stroke="#555" className="ml-[8px]"><path d="M6 0v12M0 6h12" /></svg>
        <span className="ml-[19px] text-[16px] text-[#444]">100%</span>
      </section>

      {/* taskbar */}
      <footer className="flex h-[60px] shrink-0 items-center bg-[#18282e] text-white">
        <div className="flex h-full w-[72px] items-center justify-center">
          <svg width="24" height="24" viewBox="0 0 24 24" fill="#fff">
            <path d="M0 3.500l10-1.500v9.500H0zM11 1.800L24 0v11.500H11zM0 12.500h10V22L0 20.500zM11 12.500h13V24l-13-1.800z" />
          </svg>
        </div>
        <div className="flex h-full w-[515px] items-center border-t-2 border-[#c4c4c4] bg-[#f2f2f2] pl-[17px] text-[21.500px] text-[#333]">
          <svg width="24" height="24" viewBox="0 0 24 24" fill="none" stroke="#222" strokeWidth="1.500">
            <circle cx="15" cy="9" r="7.500" />
            <path d="M10 15l-8 9" />
          </svg>
          <span className="ml-[19px] pt-[2px]">Type here to search</span>
        </div>
        <TaskButton
          className="w-[73px]"
          icon={<div className="h-[24px] w-[24px] rounded-full border-[3px] border-white" />}
        />
        <TaskButton
          icon={
            <svg width="24" height="24" viewBox="0 0 24 24" fill="none" stroke="#fff" strokeWidth="1.500">
              <path d="M0 1h6M10 1h6M0 23h6M10 23h6M2 6h14v12H2zM22 0v4M22 8v14" />
            </svg>
          }
        />
        <TaskButton line icon={<FolderIcon />} />
        <TaskButton icon={<DropboxIcon />} />
        <TaskButton icon={<SwayIcon />} />
        <TaskButton className="w-[76px]" icon={<MailIcon />} />
        <TaskButton line icon={<EdgeIcon />} />
        <TaskButton line icon={<TeamsIcon />} />
        <TaskButton line icon={<ChromeIcon />} />
        <TaskButton line icon={<WordIcon />} />
        <TaskButton line active icon={<ExcelIcon />} />

        <div className="ml-[75px] flex h-full w-[36px] items-center justify-center">
          <div className="relative flex h-[36px] w-[34px] items-center justify-center rounded-full border-[3px] border-[#3aa6e8] bg-white text-[24px] font-bold text-[#1779c4]">
            ?
            <div className="absolute -right-[3px] bottom-0 flex h-[15px] w-[15px] items-center justify-center rounded-full bg-[#1779c4] text-[11px] text-white">i</div>
          </div>
        </div>
        <div className="flex h-full w-[46px] items-center justify-center">
          <svg width="18" height="10" viewBox="0 0 18 10" fill="none" stroke="#fff"><path d="M1 10l8-9 8 9" /></svg>
        </div>
        <div className="flex h-full w-[34px] items-center justify-center">
          <svg width="26" height="20" viewBox="0 0 26 20"><path d="M5 20a5 5 0 0 1 0-10 8 8 0 0 1 15-2 6 6 0 0 1 1 12z" fill="#d8dcdf" /><path d="M5 10a8 8 0 0 1 15-2l-7 5z" fill="#9aa3a8" /></svg>
        </div>
        <div className="flex h-full w-[36px] items-center justify-center">
          <svg width="18" height="30" viewBox="0 0 18 30" fill="none" stroke="#fff"><path d="M3 8h9v13H3zM12 12l5-3v11l-5-3M4 3h7M4 27h7" /></svg>
        </div>
        <div className="flex h-full w-[34px] items-center justify-center">
          <svg width="22" height="24" viewBox="0 0 22 24" fill="none" stroke="#fff"><path d="M1 9h4l6-6v18l-6-6H1zM15 9c1 2 1 4 0 6M18 6c2 4 2 8 0 12" /></svg>
        </div>
        <div className="flex h-full w-[56px] items-center justify-center text-[16px]">ENG</div>
        <div className="flex h-full w-[108px] flex-col items-center justify-center gap-[7px] text-[17px] leading-[21px]">
          <span>13:22</span>
          <span>23/03/2021</span>
        </div>
        <div className="flex h-full flex-1 items-center pl-[25px]">
          <div className="relative h-[36px] w-[24px]">
            <div className="h-[30px] w-[24px] bg-white pt-[7px] pl-[6px]">
              <div className="mb-[3px] h-[2px] w-[13px] bg-[#333]" />
              <div className="mb-[3px] h-[2px] w-[13px] bg-[#333]" />
              <div className="h-[2px] w-[8px] bg-[#333]" />
            </div>
            <div className="absolute -right-[12px] -bottom-[6px] flex h-[24px] w-[24px] items-center justify-center rounded-full border border-[#ccc] bg-[#222] text-[15px] font-bold">8</div>
          </div>
        </div>
      </footer>
    </div>
  );
}
